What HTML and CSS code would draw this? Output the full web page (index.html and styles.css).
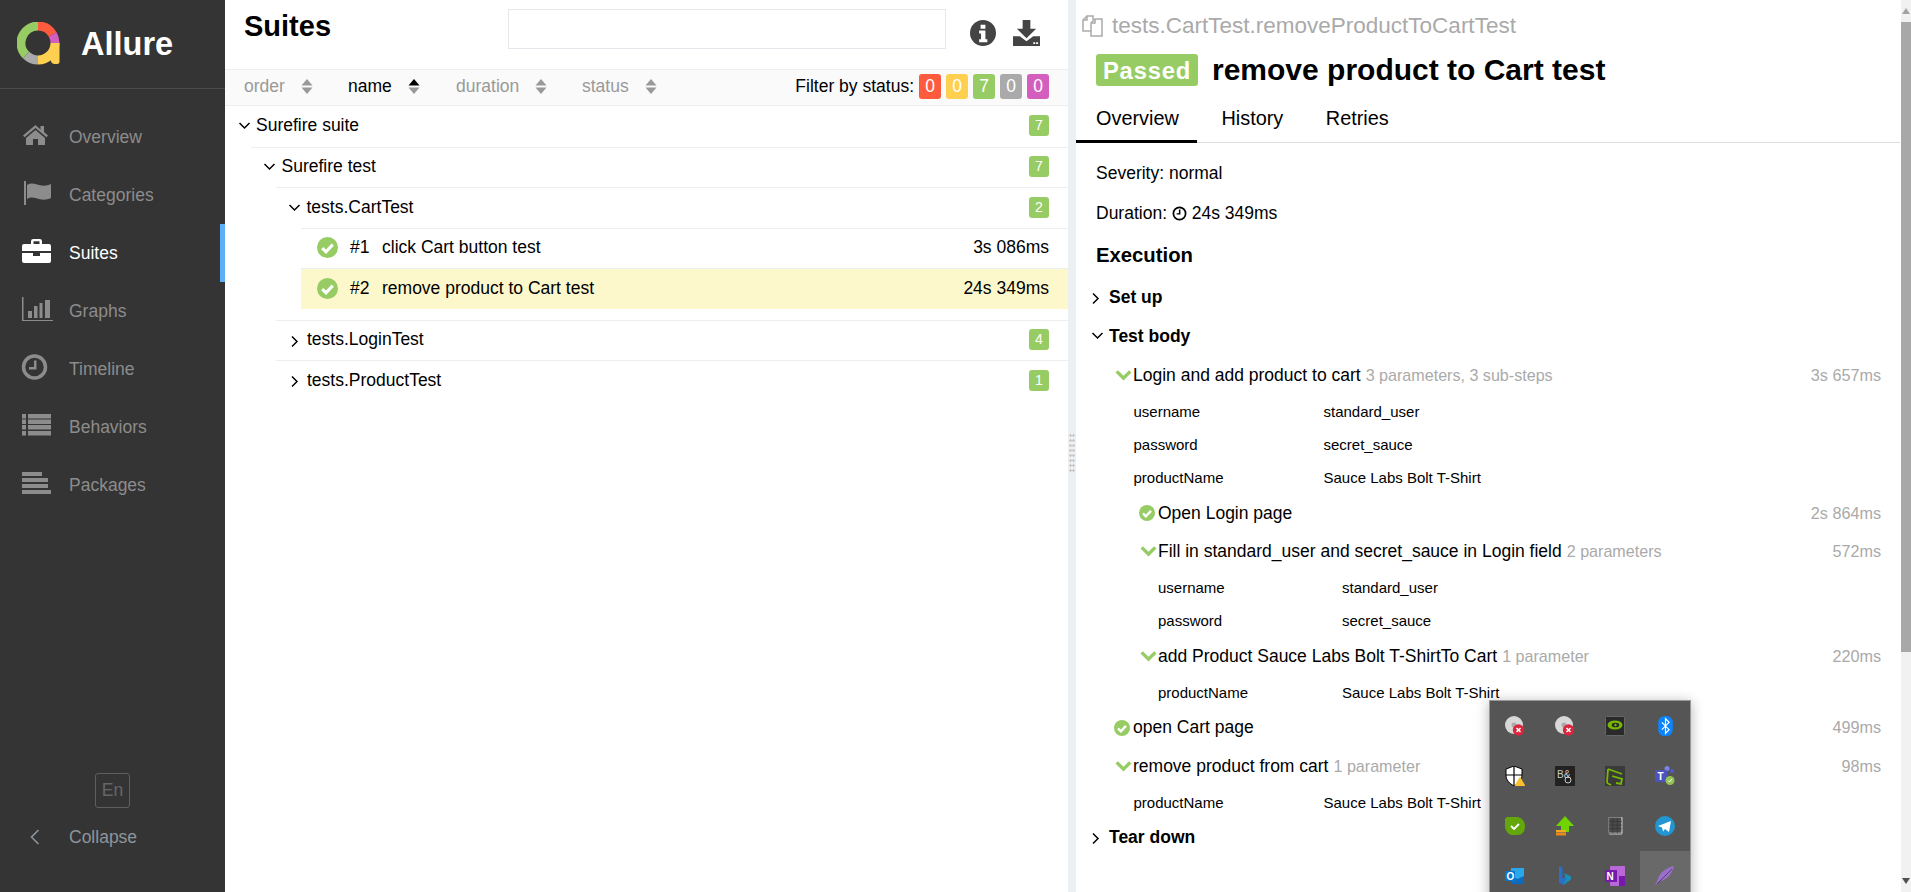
FILE: index.html
```html
<!DOCTYPE html>
<html>
<head>
    <title>Allure Report</title>
    <link rel="stylesheet" href="styles.css">
</head>
<body>

<svg class="defs" width="0" height="0">
    <symbol id="i-down" viewBox="0 0 12 8"><path d="M1 1l5 5 5-5" fill="none" stroke="currentColor" stroke-width="1.500"/></symbol>
    <symbol id="i-right" viewBox="0 0 8 12"><path d="M1 1l5 5-5 5" fill="none" stroke="currentColor" stroke-width="1.500"/></symbol>
    <symbol id="i-check" viewBox="0 0 20 20"><circle cx="10" cy="10" r="10" fill="#97cc64"/><path d="M5 10.500l3.600 3.600L15 7.300" fill="none" stroke="#fff" stroke-width="3"/></symbol>
    <symbol id="i-open" viewBox="0 0 16 11"><path d="M0 2.500L2.400.2 8 5.800 13.600.2 16 2.500 8 10.600z" fill="#97cc64"/></symbol>
    <symbol id="i-sort" viewBox="0 0 12 15"><path d="M6 0l5.500 6.500H.5z" fill="currentColor"/><path d="M6 15L.5 8.500h11z" fill="#999"/></symbol>
</svg>

<div class="app">
    <aside class="side">
        <div class="brand">
            <svg class="logo" width="46" height="46" viewBox="0 0 46 46">
                <g fill="none" stroke-width="9">
                    <path d="M21 4a17 17 0 0 1 14.700 8.500" stroke="#fd5a3e"/>
                    <path d="M35.700 12.500A17 17 0 0 1 38 21" stroke="#d35ebe"/>
                    <path d="M38 21a17 17 0 0 1-17 17" stroke="#ffd050"/>
                    <path d="M21 38a17 17 0 0 1-12-5" stroke="#aaa"/>
                    <path d="M9 33A17 17 0 0 1 21 4" stroke="#97cc64"/>
                </g>
                <path d="M34 21h8.500v18.500a2.500 2.500 0 0 1-2.500 2.500h-3a5 5 0 0 1-3.500-4z" fill="#ffd050"/>
            </svg>
            <span class="brand-name">Allure</span>
        </div>
        <nav class="nav">
            <a class="nav-item">
                <svg class="nav-icon" viewBox="0 0 32 28"><path d="M14.500 4L2 14.500l1.500 1.800L14.500 7l11 9.300 1.500-1.800-4-3.500V5h-3.500v3.400z"/><path d="M14.500 9L5 17v7h7v-6h5v6h7v-7z"/></svg>
                Overview
            </a>
            <a class="nav-item">
                <svg class="nav-icon" viewBox="0 0 32 28"><path d="M3 2h2v24H3z"/><path d="M6 6c5-3 8-1 12 0s8 1 12-1v14c-4 2-8 2-12 1s-7-3-12 0z"/></svg>
                Categories
            </a>
            <a class="nav-item active">
                <svg class="nav-icon" viewBox="0 0 32 28"><path d="M10 7V4.300A2.300 2.300 0 0 1 12.300 2h6.400A2.300 2.300 0 0 1 21 4.300V7h7a2 2 0 0 1 2 2v5H1V9a2 2 0 0 1 2-2zm2.500 0h6V4.300h-6z"/><path d="M1 16h11v3h7v-3h11v8a2 2 0 0 1-2 2H3a2 2 0 0 1-2-2z"/></svg>
                Suites
            </a>
            <a class="nav-item">
                <svg class="nav-icon" viewBox="0 0 32 28"><path d="M1 2h1.500v23H33v1H1z"/><path d="M7 16h4v7H7zM13 11h3.500v12H13zM18.500 8h3v15h-3zM24 5h5v18h-5z"/></svg>
                Graphs
            </a>
            <a class="nav-item">
                <svg class="nav-icon" viewBox="0 0 32 28"><circle cx="13.500" cy="14" r="11" fill="none" stroke="currentColor" stroke-width="3.500"/><path d="M13 7.500h2.500v9H8V14h5z"/></svg>
                Timeline
            </a>
            <a class="nav-item">
                <svg class="nav-icon" viewBox="0 0 32 28"><path d="M1 3h4v4.500H1zM7 3h23v4.500H7zM1 8.500h4V13H1zM7 8.500h23V13H7zM1 14h4v4.500H1zM7 14h23v4.500H7zM1 20h4v4.500H1zM7 20h23v4.500H7z"/></svg>
                Behaviors
            </a>
            <a class="nav-item">
                <svg class="nav-icon" viewBox="0 0 32 28"><path d="M1 3h20v4H1zM1 9h26v4H1zM1 15h26v4H1zM1 21h29v4H1z"/></svg>
                Packages
            </a>
        </nav>
        <div class="side-foot">
            <div class="lang">En</div>
            <a class="collapse">
                <svg class="collapse-icon" width="10" height="16" viewBox="0 0 10 16"><path d="M8.500 1l-7 7 7 7" fill="none" stroke="currentColor" stroke-width="1.600"/></svg>
                Collapse
            </a>
        </div>
    </aside>

    <main class="left">
        <header class="left-head">
            <h2 class="pane-title">Suites</h2>
            <input class="search" type="text">
            <svg class="head-icon info" width="26" height="26" viewBox="0 0 27 27">
                <circle cx="13.500" cy="13.500" r="13.500" fill="#444"/>
                <path d="M11 5h5v4h-5zM9.500 11H16v9h2v3H9.500v-3h2v-6h-2z" fill="#fff"/>
            </svg>
            <svg class="head-icon" width="29" height="26" viewBox="0 0 30 27">
                <path d="M11 0h8v9h6L15 19 5 9h6z" fill="#444"/>
                <path d="M1 17h7l7 5 7-5h7v10H1z" fill="#444"/>
                <path d="M22 23h2v2h-2zM25 23h2v2h-2z" fill="#fff"/>
            </svg>
        </header>

        <div class="toolbar">
            <span class="sort sort-order">order <svg class="sort-icon"><use href="#i-sort"/></svg></span>
            <span class="sort sort-name current">name <svg class="sort-icon"><use href="#i-sort"/></svg></span>
            <span class="sort sort-duration">duration <svg class="sort-icon"><use href="#i-sort"/></svg></span>
            <span class="sort sort-status">status <svg class="sort-icon"><use href="#i-sort"/></svg></span>
            <div class="filter">
                Filter by status:
                <span class="pill failed">0</span>
                <span class="pill broken">0</span>
                <span class="pill passed">7</span>
                <span class="pill skipped">0</span>
                <span class="pill unknown">0</span>
            </div>
        </div>

        <div class="tree">
            <div class="node first">
                <svg class="chev"><use href="#i-down"/></svg>
                <span class="node-name">Surefire suite</span>
                <span class="count">7</span>
            </div>
            <div class="sub">
                <div class="node">
                    <svg class="chev"><use href="#i-down"/></svg>
                    <span class="node-name">Surefire test</span>
                    <span class="count">7</span>
                </div>
                <div class="sub">
                    <div class="node">
                        <svg class="chev"><use href="#i-down"/></svg>
                        <span class="node-name">tests.CartTest</span>
                        <span class="count">2</span>
                    </div>
                    <div class="sub tests">
                        <div class="node test">
                            <svg class="check"><use href="#i-check"/></svg>
                            <span class="order">#1</span>
                            <span class="node-name">click Cart button test</span>
                            <span class="time">3s 086ms</span>
                        </div>
                        <div class="node test selected">
                            <svg class="check"><use href="#i-check"/></svg>
                            <span class="order">#2</span>
                            <span class="node-name">remove product to Cart test</span>
                            <span class="time">24s 349ms</span>
                        </div>
                    </div>
                    <div class="node">
                        <svg class="chev closed"><use href="#i-right"/></svg>
                        <span class="node-name">tests.LoginTest</span>
                        <span class="count">4</span>
                    </div>
                    <div class="node">
                        <svg class="chev closed"><use href="#i-right"/></svg>
                        <span class="node-name">tests.ProductTest</span>
                        <span class="count">1</span>
                    </div>
                </div>
            </div>
        </div>
    </main>

    <div class="splitter"><div class="dots"></div></div>

    <section class="right">
        <div class="path">
            <svg class="copy" width="24" height="24" viewBox="0 0 24 24" fill="none" stroke="#aaa" stroke-width="1.500">
                <path d="M11 6V2H5L1 6v11h8"/><path d="M1 6h4V2"/><path d="M9 9l4-4h7v17H9z"/><path d="M9 9h4V5"/>
            </svg>
            tests.CartTest.removeProductToCartTest
        </div>
        <div class="title-row">
            <span class="status-label">Passed</span>
            <h2 class="test-title">remove product to Cart test</h2>
        </div>
        <div class="tabs">
            <a class="tab active">Overview</a>
            <a class="tab">History</a>
            <a class="tab">Retries</a>
        </div>
        <p class="meta severity">Severity: normal</p>
        <p class="meta">Duration:
            <svg class="clock" width="15" height="15" viewBox="0 0 13 13"><circle cx="6.500" cy="6.500" r="5.300" fill="none" stroke="#000" stroke-width="1.500"/><path d="M6 3h1.300v4.300H4V6.200h2z"/></svg>
            24s 349ms</p>
        <h3 class="exec-title">Execution</h3>

        <div class="stage"><svg class="stage-chev closed"><use href="#i-right"/></svg>Set up</div>
        <div class="stage"><svg class="stage-chev"><use href="#i-down"/></svg>Test body</div>

        <div class="step">
            <svg class="step-open"><use href="#i-open"/></svg>
            <span class="step-name">Login and add product to cart</span>
            <span class="step-info">3 parameters, 3 sub-steps</span>
            <span class="step-time">3s 657ms</span>
        </div>
        <table class="params">
            <tr><td>username</td><td>standard_user</td></tr>
            <tr><td>password</td><td>secret_sauce</td></tr>
            <tr><td>productName</td><td>Sauce Labs Bolt T-Shirt</td></tr>
        </table>

        <div class="nested">
            <div class="step">
                <svg class="step-ok"><use href="#i-check"/></svg>
                <span class="step-name">Open Login page</span>
                <span class="step-time">2s 864ms</span>
            </div>
            <div class="step">
                <svg class="step-open"><use href="#i-open"/></svg>
                <span class="step-name">Fill in standard_user and secret_sauce in Login field</span>
                <span class="step-info">2 parameters</span>
                <span class="step-time">572ms</span>
            </div>
            <table class="params">
                <tr><td>username</td><td>standard_user</td></tr>
                <tr><td>password</td><td>secret_sauce</td></tr>
            </table>
            <div class="step">
                <svg class="step-open"><use href="#i-open"/></svg>
                <span class="step-name">add Product Sauce Labs Bolt T-ShirtTo Cart</span>
                <span class="step-info">1 parameter</span>
                <span class="step-time">220ms</span>
            </div>
            <table class="params">
                <tr><td>productName</td><td>Sauce Labs Bolt T-Shirt</td></tr>
            </table>
        </div>

        <div class="step">
            <svg class="step-ok"><use href="#i-check"/></svg>
            <span class="step-name">open Cart page</span>
            <span class="step-time">499ms</span>
        </div>
        <div class="step">
            <svg class="step-open"><use href="#i-open"/></svg>
            <span class="step-name">remove product from cart</span>
            <span class="step-info">1 parameter</span>
            <span class="step-time">98ms</span>
        </div>
        <table class="params">
            <tr><td>productName</td><td>Sauce Labs Bolt T-Shirt</td></tr>
        </table>

        <div class="stage"><svg class="stage-chev closed"><use href="#i-right"/></svg>Tear down</div>
    </section>

    <div class="scrollbar">
        <svg class="arrow" width="10" height="6" viewBox="0 0 10 6"><path d="M5 0l4 6H1z" fill="#a3a3a3"/></svg>
        <div class="thumb"></div>
        <svg class="arrow" width="10" height="6" viewBox="0 0 10 6"><path d="M5 6L1 0h8z" fill="#505050"/></svg>
    </div>
</div>

<div class="tray">
    <div class="tray-cell">
        <svg viewBox="0 0 20 20" width="20" height="20"><circle cx="9" cy="9" r="9" fill="#d8d8d8"/><circle cx="9" cy="9" r="2.500" fill="#aaa"/><circle cx="13.500" cy="14" r="5.700" fill="#d9263c"/><path d="M11.500 12l4 4m0-4l-4 4" stroke="#fff" stroke-width="1.500"/></svg>
    </div>
    <div class="tray-cell">
        <svg viewBox="0 0 20 20" width="20" height="20"><circle cx="9" cy="9" r="9" fill="#d8d8d8"/><circle cx="9" cy="9" r="2.500" fill="#aaa"/><circle cx="13.500" cy="14" r="5.700" fill="#d9263c"/><path d="M11.500 12l4 4m0-4l-4 4" stroke="#fff" stroke-width="1.500"/></svg>
    </div>
    <div class="tray-cell">
        <svg viewBox="0 0 20 20" width="20" height="20"><rect x=".5" y=".5" width="19" height="19" rx="1" fill="#2a2a2a" stroke="#666"/><ellipse cx="10" cy="9" rx="7.500" ry="4.500" fill="#76b900"/><ellipse cx="10.500" cy="9" rx="3.800" ry="2.300" fill="#2a2a2a"/><circle cx="10.500" cy="9" r="1.200" fill="#76b900"/></svg>
    </div>
    <div class="tray-cell">
        <svg viewBox="0 0 16 22" width="15" height="20"><rect width="16" height="22" rx="7" fill="#0a84ff"/><path d="M4 7l8 8-4 4V3l4 4-8 8" fill="none" stroke="#fff" stroke-width="1.300"/></svg>
    </div>

    <div class="tray-cell">
        <svg viewBox="0 0 20 20" width="20" height="20"><path d="M9 0l8 3v6c0 5-3 8-8 11-5-3-8-6-8-11V3z" fill="#fff" stroke="#000"/><path d="M9 0v20M1 9h16" stroke="#000" stroke-width="1.200"/><path d="M15 10.500l5.500 9.500h-11z" fill="#fbc02d"/></svg>
    </div>
    <div class="tray-cell">
        <svg viewBox="0 0 20 20" width="20" height="20"><rect width="20" height="20" fill="#222"/><text class="tray-text bo" x="2" y="12">B&amp;</text><circle cx="13" cy="14" r="3" fill="none" stroke="#ccc"/></svg>
    </div>
    <div class="tray-cell">
        <svg viewBox="0 0 20 20" width="20" height="20"><rect width="20" height="20" fill="#3a3a3a"/><path d="M3 3l14 5M3 3l-1 14M7 10l10 3-1 5-5-1M2 17l4 2" fill="none" stroke="#76b900" stroke-width="1.800"/></svg>
    </div>
    <div class="tray-cell">
        <svg viewBox="0 0 20 20" width="20" height="20"><circle cx="12" cy="2.500" r="2.500" fill="#7b83eb"/><circle cx="17" cy="5" r="2" fill="#5059c9"/><rect y="4" width="12" height="12" rx="1" fill="#4b53bc"/><text class="tray-text" x="2.500" y="14">T</text><circle cx="15" cy="14.500" r="4.500" fill="#92c353"/><path d="M13 14.500l1.500 1.500 2.500-3" fill="none" stroke="#fff"/></svg>
    </div>

    <div class="tray-cell">
        <svg viewBox="0 0 20 20" width="20" height="20"><path d="M2 1h10c4 0 8 4 8 9 0 6-3 9-8 9H7c-4 0-7-5-7-9V3z" fill="#63a70a"/><path d="M6 10l3 3 5-5" fill="none" stroke="#fff" stroke-width="1.800"/></svg>
    </div>
    <div class="tray-cell">
        <svg viewBox="0 0 20 20" width="20" height="20"><path d="M10 0l9 10h-5v6H6v-6H1z" fill="#6fd400"/><rect x="1" y="14" width="10" height="2.500" fill="#f5a623"/><rect x="1" y="17" width="10" height="2.500" fill="#e8891c"/></svg>
    </div>
    <div class="tray-cell">
        <svg viewBox="0 0 16 20" width="15" height="18"><rect x=".5" y=".5" width="15" height="17" fill="#4a4a4a" stroke="#888"/><path d="M15 0v19H1" fill="none" stroke="#ccc"/><path d="M1 5h14M1 9h14M1 13h14M5 1v17M10 1v17" stroke="#333" stroke-width=".700"/></svg>
    </div>
    <div class="tray-cell">
        <svg viewBox="0 0 20 20" width="20" height="20"><circle cx="10" cy="10" r="10" fill="#2196d3"/><path d="M3 10l13-5-2 11-4-3-2 2.500-1-4z" fill="#fff"/></svg>
    </div>

    <div class="tray-cell">
        <svg viewBox="0 0 20 20" width="20" height="20"><rect x="6" y="2" width="13" height="16" fill="#28a8ea"/><path d="M6 10l6.500 3L19 10v8H6z" fill="#0f6cbd"/><rect y="5" width="10" height="10" fill="#0078d4"/><text class="tray-text" x="1.500" y="13.500">O</text></svg>
    </div>
    <div class="tray-cell">
        <svg viewBox="0 0 14 20" width="14" height="20"><path d="M1 0l3.500 1.500v11l5-3 1.500 3-6.500 6.500L1 16.500z" fill="#2a6fc9"/><path d="M6 7l7 3.500v3l-8 6 3-6z" fill="#1a8fb5"/></svg>
    </div>
    <div class="tray-cell">
        <svg viewBox="0 0 20 20" width="20" height="20"><rect x="5" width="15" height="20" rx="1" fill="#ba68d8"/><rect x="14" y="10" width="6" height="10" fill="#7719aa"/><rect y="4" width="12" height="12" fill="#7719aa"/><text class="tray-text" x="1.500" y="14">N</text></svg>
    </div>
    <div class="tray-cell hover">
        <svg viewBox="0 0 20 20" width="20" height="20"><path d="M19 0C11 2 5 6 3 13c-1 2-2 4-3 7 2-2 3-4 5-5 7-1 12-7 14-15z" fill="#9a6fc8"/><path d="M17 3L2 18" stroke="#5d3a88"/></svg>
    </div>
</div>

</body>
</html>
```

FILE: styles.css
```css
* {
    box-sizing: border-box;
}
html, body {
    margin: 0;
    height: 100%;
    overflow: hidden;
}
body {
    font-family: "Liberation Sans", Arial, sans-serif;
    font-size: 17.500px;
    color: #000;
    background: #fff;
}
.defs {
    display: block;
    height: 0;
}
.app {
    display: flex;
    height: 892px;
}

/* sidebar */
.side {
    width: 225px;
    flex: none;
    background: #343434;
    display: flex;
    flex-direction: column;
}
.brand {
    height: 89px;
    padding-left: 17px;
    display: flex;
    align-items: center;
    border-bottom: 1px solid #4b4b4b;
}
.logo {
    margin-top: 2px;
    flex: none;
}
.brand-name {
    margin-left: 18px;
    color: #fff;
    font-size: 32.500px;
    font-weight: bold;
}
.nav {
    padding-top: 19px;
}
.nav-item {
    height: 58px;
    padding-left: 21px;
    display: flex;
    align-items: center;
    color: #8c8c8c;
}
.nav-icon {
    width: 32px;
    height: 28px;
    margin: 0 16px 4px 0;
    flex: none;
    fill: currentColor;
    color: #8c8c8c;
}
.nav-item.active {
    color: #fff;
    border-right: 5px solid #5daef5;
}
.nav-item.active .nav-icon {
    color: #fff;
}
.side-foot {
    margin-top: auto;
    padding-bottom: 35px;
}
.lang {
    width: 35px;
    height: 35px;
    margin: 0 0 9px 95px;
    border: 1px solid #5f5f5f;
    border-radius: 3px;
    color: #666;
    line-height: 33px;
    text-align: center;
}
.collapse {
    height: 40px;
    padding-left: 30px;
    display: flex;
    align-items: center;
    color: #8e959c;
}
.collapse-icon {
    margin-right: 29px;
}

/* left pane */
.left {
    width: 843px;
    flex: none;
}
.left-head {
    height: 69px;
    padding-left: 19px;
    display: flex;
    align-items: flex-start;
}
.pane-title {
    width: 264px;
    margin: 7px 0 0;
    font-size: 29px;
    line-height: 38px;
}
.search {
    width: 438px;
    height: 40px;
    margin-top: 9px;
    border: 1px solid #e4e7eb;
    background: #fff;
}
.head-icon {
    margin: 20px 0 0 16px;
    flex: none;
}
.head-icon.info {
    margin: 20px 0 0 24px;
}
.toolbar {
    height: 37px;
    padding: 0 19px 2px 19px;
    display: flex;
    align-items: center;
    background: #fafafa;
    border-top: 1px solid #eceef1;
    border-bottom: 1px solid #eceef1;
}
.sort {
    display: flex;
    align-items: center;
    color: #999;
}
.sort.current {
    color: #000;
}
.sort-order {
    width: 104px;
}
.sort-name {
    width: 108px;
}
.sort-duration {
    width: 126px;
}
.sort-icon {
    width: 12px;
    height: 15px;
    margin-left: 16px;
    color: #999;
}
.current .sort-icon {
    color: #000;
}
.filter {
    margin-left: auto;
    display: flex;
    align-items: center;
}
.pill {
    width: 22px;
    height: 25px;
    margin-left: 5px;
    border-radius: 3px;
    color: #fff;
    line-height: 25px;
    text-align: center;
}
.failed { background: #fd5a3e; }
.broken { background: #ffd050; }
.passed { background: #97cc64; }
.skipped { background: #aaa; }
.unknown { background: #d35ebe; }

.tree {
    padding-left: 1px;
}
.sub {
    margin-left: 25px;
}
.node {
    height: 40.500px;
    padding-right: 19px;
    padding-bottom: 1px;
    display: flex;
    align-items: center;
    border-top: 1px solid #eceef1;
}
.node.first {
    border-top: 0;
    padding-left: 0;
}
.chev {
    width: 13px;
    height: 8px;
    margin: 1px 5px 0 12px;
    flex: none;
}
.chev.closed {
    width: 8px;
    height: 13px;
    margin: 3px 8.500px 0 14px;
}
.sub .node {
    padding-left: 24.500px;
}
.sub .node > .chev {
    margin-left: -13px;
    margin-right: 6px;
}
.sub .node > .chev.closed {
    margin-left: -10px;
    margin-right: 8.500px;
}
.count {
    width: 20px;
    height: 21px;
    margin-left: auto;
    border-radius: 3px;
    background: #97cc64;
    color: #fff;
    font-size: 14px;
    line-height: 21px;
    text-align: center;
}
.tests {
    margin-bottom: 11px;
}
.sub .node.test {
    padding-left: 16px;
}
.check {
    width: 21px;
    height: 21px;
    flex: none;
}
.order {
    width: 32px;
    margin-left: 12px;
    flex: none;
}
.time {
    margin-left: auto;
}
.selected {
    background: #fdf8cc;
}

/* splitter */
.splitter {
    width: 8px;
    flex: none;
    background: #ecf0f3;
    display: flex;
    align-items: center;
    justify-content: center;
}
.dots {
    width: 6px;
    height: 39px;
    margin-top: 13px;
    background-image: radial-gradient(#c9c9c9 1px, transparent 1.200px);
    background-size: 3px 5px;
}

/* right pane */
.right {
    width: 825px;
    flex: none;
    padding-right: 20px;
    overflow: hidden;
}
.path {
    height: 50px;
    padding: 2px 0 0 6px;
    display: flex;
    align-items: center;
    color: #aaa;
    font-size: 22.500px;
}
.copy {
    margin-right: 6px;
}
.title-row {
    height: 40px;
    padding-left: 20px;
    display: flex;
    align-items: center;
}
.status-label {
    width: 102px;
    height: 32px;
    border-radius: 3px;
    background: #97cc64;
    color: #fff;
    font-size: 23.800px;
    font-weight: bold;
    line-height: 34px;
    text-align: center;
    letter-spacing: .8px;
}
.test-title {
    margin: 0 0 0 14px;
    font-size: 30px;
    line-height: 38px;
}
.tabs {
    height: 53px;
    margin-right: -19px;
    padding-top: 4px;
    display: flex;
    border-bottom: 1px solid #ddd;
}
.tab {
    height: 49px;
    margin-right: 4.500px;
    padding: 0 18px 0 20px;
    line-height: 48px;
    font-size: 19.900px;
}
.tab.active {
    border-bottom: 3px solid #000;
}
.meta {
    margin: 0;
    padding-left: 20px;
    height: 40px;
    line-height: 40px;
}
.severity {
    margin-top: 10px;
}
.clock {
    vertical-align: -2px;
}
.exec-title {
    height: 42px;
    margin: 1px 0 2.500px;
    padding-left: 20px;
    font-size: 20.300px;
    font-weight: bold;
    line-height: 42px;
}
.stage {
    height: 38.500px;
    padding-left: 31px;
    display: flex;
    align-items: center;
    font-weight: bold;
}
.stage + .step {
    margin-top: 1px;
}
.stage-chev {
    width: 13px;
    height: 8px;
    margin: 0 5px 0 -16px;
}
.stage-chev.closed {
    width: 8px;
    height: 13px;
    margin: 2px 9px 0 -15px;
}
.step {
    height: 38.500px;
    padding-left: 39px;
    display: flex;
    align-items: center;
}
.step-open {
    width: 17px;
    height: 11px;
    margin-right: 1px;
    flex: none;
}
.step-ok {
    width: 16px;
    height: 16px;
    margin: 0 3px 0 -1px;
    flex: none;
}
.step-info {
    margin-left: 5px;
    color: #aaa;
    font-size: 16.100px;
}
.step-time {
    margin-left: auto;
    color: #aaa;
    font-size: 16.200px;
}
.params {
    margin-left: 57.500px;
    border-collapse: collapse;
    font-size: 15px;
}
.params td {
    height: 33px;
    padding: 0;
}
.params td:first-child {
    width: 190px;
}
.nested {
    margin-left: 25px;
}
.nested .params {
    margin-left: 57px;
}
.nested .params td:first-child {
    width: 184px;
}

/* scrollbar */
.scrollbar {
    width: 10px;
    flex: none;
    background: #f1f1f1;
    display: flex;
    flex-direction: column;
    align-items: center;
}
.arrow {
    margin: 8px 0;
    flex: none;
}
.thumb {
    width: 100%;
    height: 630px;
    background: #a8a8a8;
}
.thumb + .arrow {
    margin-top: auto;
}

/* tray popup */
.tray {
    position: absolute;
    left: 1489px;
    top: 700px;
    width: 202px;
    height: 210px;
    display: grid;
    grid-template-columns: repeat(4, 50px);
    grid-auto-rows: 50px;
    background: #555;
    border: 1px solid #999;
    box-shadow: 0 2px 12px rgba(0, 0, 0, .3);
}
.tray-cell {
    display: flex;
    align-items: center;
    justify-content: center;
}
.tray-cell.hover {
    background: #696969;
}
.tray-text {
    fill: #fff;
    font-family: "Liberation Sans", Arial, sans-serif;
    font-size: 10px;
    font-weight: bold;
}
.tray-text.bo {
    fill: #ccc;
    font-weight: normal;
}
```
